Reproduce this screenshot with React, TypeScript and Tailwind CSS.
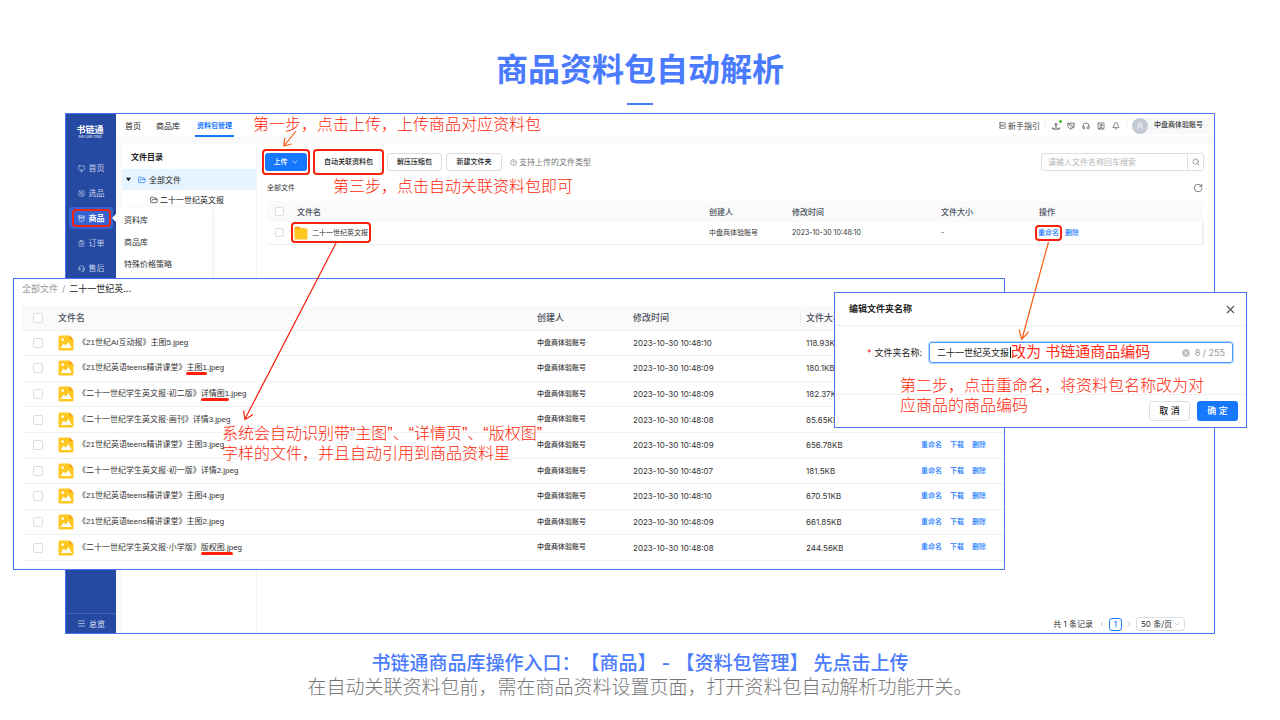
import type { ReactNode } from "react"
import {
  Archive,
  Bell,
  ChevronDown,
  ChevronLeft,
  ChevronRight,
  CircleHelp,
  CircleX,
  ClipboardList,
  FolderOpen,
  Handshake,
  Headphones,
  Headset,
  Menu,
  Monitor,
  RotateCw,
  Search,
  Server,
  SquareChartGantt,
  SquareUser,
  UserRound,
  X,
} from "lucide-react"
import clsx from "clsx"

const navItems = [
  { label: "首页", icon: Monitor },
  { label: "选品", icon: SquareChartGantt },
  { label: "商品", icon: Archive, active: true },
  { label: "订单", icon: ClipboardList },
  { label: "售后", icon: Headset },
]

const subMenu = ["资料库", "商品库", "特殊价格策略"]

const files = [
  { before: "《21世纪AI互动报》主图5.jpeg", time: "10:48:10", size: "118.93KB" },
  { before: "《21世纪英语teens精讲课堂》", mark: "主图1", after: ".jpeg", time: "10:48:09", size: "180.1KB" },
  { before: "《二十一世纪学生英文报·初二版》", mark: "详情图1", after: ".jpeg", time: "10:48:09", size: "182.37KB" },
  { before: "《二十一世纪学生英文报·画刊》详情3.jpeg", time: "10:48:08", size: "85.65KB" },
  { before: "《21世纪英语teens精讲课堂》主图3.jpeg", time: "10:48:09", size: "656.78KB", actions: true },
  { before: "《二十一世纪学生英文报·初一版》详情2.jpeg", time: "10:48:07", size: "181.5KB", actions: true },
  { before: "《21世纪英语teens精讲课堂》主图4.jpeg", time: "10:48:10", size: "670.51KB", actions: true },
  { before: "《21世纪英语teens精讲课堂》主图2.jpeg", time: "10:48:09", size: "661.85KB", actions: true },
  { before: "《二十一世纪学生英文报·小学版》", mark: "版权图.jp", after: "eg", time: "10:48:08", size: "244.56KB", actions: true },
]

function Check({ label, className }: { label: string; className?: string }) {
  return (
    <input
      type="checkbox"
      aria-label={label}
      className={clsx("block appearance-none rounded-[2px] border border-[#dcdcdc] bg-white", className)}
    />
  )
}

function ImageFileIcon() {
  return (
    <svg viewBox="0 0 16 16" className="size-4 shrink-0" aria-hidden="true">
      <path d="M2 .5h9.500L15.500 4.500V14a1.500 1.500 0 0 1-1.500 1.500H2A1.500 1.500 0 0 1 .5 14V2A1.500 1.500 0 0 1 2 .5z" fill="#ffc721" />
      <path d="M11.500.5 15.500 4.500h-3a1 1 0 0 1-1-1z" fill="#f79a0c" />
      <circle cx="4.600" cy="4.600" r="1.300" fill="#fff" />
      <path d="M2.500 13l3.200-4.500 2 2.300L10.300 7l3.400 6z" fill="#fff" />
    </svg>
  )
}

function FolderIcon() {
  return (
    <svg viewBox="0 0 14 14" className="size-[14px] shrink-0" aria-hidden="true">
      <path d="M.5 2A1.300 1.300 0 0 1 1.800.7h3.400l1.500 1.600h4.500v3H.5z" fill="#f79a0c" />
      <rect x=".5" y="2.600" width="13" height="10.900" rx="1.300" fill="#ffc721" />
    </svg>
  )
}

function UploadTrayIcon() {
  return (
    <svg viewBox="0 0 10 10" className="size-2" fill="none" stroke="currentColor" strokeWidth="1.2" aria-hidden="true">
      <path d="M5 7.500V1.800M3.200 3.500 5 1.700l1.800 1.800M.8 6.800v2h8.400v-2" />
    </svg>
  )
}

// Red frame that calls out a control
function Callout({ children, className }: { children: ReactNode; className?: string }) {
  return (
    <span className={clsx("inline-flex items-center justify-center rounded-[4px] border-2 border-[#f5220c]", className)}>
      {children}
    </span>
  )
}

function Note({ children, className }: { children: ReactNode; className: string }) {
  return (
    <p
      className={clsx(
        "absolute z-30 font-['Liberation_Sans','Noto_Sans_CJK_SC',sans-serif] text-base leading-5 font-light whitespace-nowrap text-[#ff1f0a]",
        className,
      )}
    >
      {children}
    </p>
  )
}

function Sidebar() {
  return (
    <aside className="flex w-[50px] shrink-0 flex-col bg-[#264aa2] text-[#c5d0ea]">
      <div className="flex h-[43px] flex-col items-center pt-[10px] pr-[2px] text-white">
        <span className="text-[9px] leading-[11px] font-bold">书链通</span>
        <span className="text-[3px] leading-[4px]">SHU LIAN TONG</span>
      </div>
      <nav className="flex flex-col gap-[3px] px-[3px]">
        {navItems.map(({ label, icon: Icon, active }) => (
          <div key={label} className="relative">
            <a
              href="#"
              className={clsx(
                "flex h-[22px] items-center justify-center gap-1 rounded-[3px] text-[8px]",
                active && "bg-[#3563cf] font-bold text-white",
              )}
            >
              {active ? (
                <Callout className="h-[18px] w-[39px] gap-1">
                  <Icon size={7} />
                  {label}
                </Callout>
              ) : (
                <>
                  <Icon size={7} />
                  {label}
                </>
              )}
            </a>
            {active && (
              <>
                <svg viewBox="0 0 4 8" className="absolute top-[7px] -right-[3px] h-2 w-1" aria-hidden="true">
                  <path d="M4 0v8L0 4z" fill="#fff" />
                </svg>
                <div className="absolute top-0 left-[47px] z-10 flex h-20 w-[96px] flex-col bg-white pt-[2px] pl-2 text-[8px] text-[#333] shadow-[2px_0_4px_rgba(0,0,0,0.06)]">
                  {subMenu.map((item) => (
                    <a key={item} href="#" className="flex h-[22px] items-center">
                      {item}
                    </a>
                  ))}
                </div>
              </>
            )}
          </div>
        ))}
      </nav>
      <a
        href="#"
        className="mt-auto flex h-[20px] items-center justify-center gap-[3px] border-t border-[#4263b0] text-[8px] font-medium"
      >
        <Menu size={9} />
        总览
      </a>
    </aside>
  )
}

function TopBar() {
  return (
    <header className="flex h-6 items-center border-b border-[#f5f5f5] pr-1 pl-[9px] text-[8px] text-[#222]">
      <nav className="flex h-full items-center gap-[15px]">
        <a href="#">首页</a>
        <a href="#">商品库</a>
        <a href="#" className="flex h-full items-center border-b-2 border-[#1677ff] px-[2px] pt-[3px] text-[7px] font-bold text-[#1677ff]">
          资料包管理
        </a>
      </nav>
      <div className="ml-auto flex items-center text-[#444]">
        <a href="#" className="flex items-center gap-[2px] pr-[5px]">
          <Server size={7} />
          新手指引
        </a>
        <div className="flex items-center gap-[7px] border-x border-[#eee] px-[6px]">
          <span className="relative">
            <UploadTrayIcon />
            <span className="absolute -top-[2px] -right-[2px] size-[3px] rounded-full bg-[#35c31b]" />
          </span>
          <Handshake size={8} />
          <Headphones size={8} />
          <SquareUser size={8} />
          <Bell size={8} />
        </div>
        <div className="ml-[5px] flex h-4 items-center gap-[6px] rounded-full bg-[#f7f8fa] pr-[7px] text-[7px] font-medium text-[#333]">
          <span className="flex size-4 items-center justify-center rounded-full bg-[#c5cbd6] text-white">
            <UserRound size={8} />
          </span>
          中盘商体验账号
        </div>
      </div>
    </header>
  )
}

function Directory() {
  return (
    <section className="ml-[6px] w-[135px] shrink-0 border-r border-[#f2f2f2] bg-white text-[8px] text-[#222]">
      <h2 className="flex h-[25px] items-center pl-[9px] font-bold">文件目录</h2>
      <div className="flex h-[21px] items-center bg-[#e6f4ff] pl-1">
        <svg viewBox="0 0 6 6" className="size-[5px]" aria-hidden="true">
          <path d="M0 1h6L3 5z" fill="#111" />
        </svg>
        <FolderOpen size={8} className="mr-[3px] ml-[7px] text-[#1677ff]" />
        全部文件
      </div>
      <div className="flex h-5 items-center gap-[2px] pl-7">
        <FolderOpen size={8} />
        二十一世纪英文报
      </div>
    </section>
  )
}

function Toolbar() {
  const plain = "h-[18px] rounded-[3px] border border-[#dedede] bg-white font-medium whitespace-nowrap"
  return (
    <div className="flex h-[26px] items-center text-[7px] text-[#222]">
      <Callout className="h-[26px] w-12">
        <button className="flex h-[18px] w-[42px] items-center justify-center gap-[3px] rounded-[3px] bg-[#1677ff] font-medium text-white">
          上传
          <ChevronDown size={8} />
        </button>
      </Callout>
      <Callout className="ml-[3px] h-[26px] w-[71px]">
        <button className="h-[18px] w-[63px] font-medium whitespace-nowrap">自动关联资料包</button>
      </Callout>
      <button className={clsx(plain, "ml-[3px] w-[55px]")}>解压压缩包</button>
      <button className={clsx(plain, "ml-1 w-[56px]")}>新建文件夹</button>
      <span className="ml-2 flex items-center gap-[2px] text-[8px] text-[#777]">
        <CircleHelp size={7} />
        支持上传的文件类型
      </span>
      <form className="ml-auto flex h-[18px] w-[163px] rounded-[3px] border border-[#dedede]">
        <input
          type="search"
          aria-label="搜索文件"
          placeholder="请输入文件名称回车搜索"
          className="min-w-0 flex-1 pl-[6px] text-[8px] outline-none placeholder:text-[#b5b5b5]"
        />
        <button type="button" aria-label="搜索" className="flex w-4 items-center justify-center border-l border-[#dedede] text-[#777]">
          <Search size={8} />
        </button>
      </form>
    </div>
  )
}

function FolderTable() {
  return (
    <table className="w-full table-fixed border-collapse text-left text-[7px] text-[#333]">
      <colgroup>
        <col className="w-[22px]" />
        <col />
        <col className="w-[83px]" />
        <col className="w-[149px]" />
        <col className="w-[98px]" />
        <col className="w-[172px]" />
      </colgroup>
      <thead className="bg-[#fafafa] text-[8px] text-[#4a5260]">
        <tr className="h-[21px] *:px-2 *:font-medium">
          <th><Check label="全选文件夹" className="size-[9px]" /></th>
          <th>文件名</th>
          <th>创建人</th>
          <th>修改时间</th>
          <th>文件大小</th>
          <th>操作</th>
        </tr>
      </thead>
      <tbody>
        <tr className="h-[22px] border-b border-[#f0f0f0] *:px-2">
          <td><Check label="选择二十一世纪英文报" className="size-[9px]" /></td>
          <td>
            <Callout className="-ml-[6px] h-[21px] w-20 gap-1 whitespace-nowrap">
              <FolderIcon />
              二十一世纪英文报
            </Callout>
          </td>
          <td className="whitespace-nowrap">中盘商体验账号</td>
          <td className="whitespace-nowrap">2023-10-30 10:48:10</td>
          <td>-</td>
          <td className="border-r-2 border-[#f0f0f0] font-medium text-[#1677ff]">
            <span className="-ml-1 flex items-center gap-[3px]">
              <Callout className="h-4 w-[27px]">
                <button>重命名</button>
              </Callout>
              <button>删除</button>
            </span>
          </td>
        </tr>
      </tbody>
    </table>
  )
}

function Pagination() {
  return (
    <div className="mt-auto flex h-[18px] items-center justify-end pr-[19px] text-[8px] text-[#333]">
      共 1 条记录
      <button aria-label="上一页" className="ml-[5px] text-[#aaa]"><ChevronLeft size={8} /></button>
      <button className="mx-[3px] size-[13px] rounded-[3px] border border-[#1677ff] leading-[11px] font-medium text-[#1677ff]">1</button>
      <button aria-label="下一页" className="mr-[3px] text-[#aaa]"><ChevronRight size={8} /></button>
      <label className="relative flex items-center">
        <select aria-label="每页条数" className="h-[14px] w-[49px] appearance-none rounded-[3px] border border-[#dedede] pl-1 leading-3">
          <option>50 条/页</option>
        </select>
        <ChevronDown size={8} className="pointer-events-none absolute right-1 text-[#bbb]" />
      </label>
    </div>
  )
}

function Workspace() {
  return (
    <div className="flex min-h-[521px] border border-[#4874f5] bg-white">
      <Sidebar />
      <div className="flex min-w-0 flex-1 flex-col">
        <TopBar />
        <div className="flex flex-1 bg-[#f9f9fa] pt-[6px]">
          <Directory />
          <main className="flex min-w-0 flex-1 flex-col bg-white pt-[5px] pr-[10px] pl-[5px]">
            <Toolbar />
            <div className="flex h-[26px] items-center justify-between pr-[1px] pl-[5px] text-[7px] text-[#333]">
              全部文件
              <button aria-label="刷新" className="text-[#666]"><RotateCw size={10} /></button>
            </div>
            <div className="pl-[5px]">
              <FolderTable />
            </div>
            <Pagination />
          </main>
        </div>
      </div>
    </div>
  )
}

function FilePanel() {
  return (
    <section className="absolute top-[165px] right-[275px] left-[13px] z-20 border border-[#4874f5] bg-white pb-2 pl-2">
      <div className="flex h-[27px] items-start gap-1 pt-[3px] text-[9px] leading-[14px] text-[#999]">
        <a href="#">全部文件</a>
        <span>/</span>
        <span className="text-[#222]">二十一世纪英...</span>
      </div>
      <table className="h-[255px] w-full table-fixed border-collapse text-left text-[7px] text-[#333]">
        <colgroup>
          <col className="w-7" />
          <col />
          <col className="w-24" />
          <col className="w-[173px]" />
          <col className="w-[115px]" />
          <col className="w-[91px]" />
        </colgroup>
        <thead className="bg-[#fafafa] text-[9px] text-[#4a5260]">
          <tr className="h-6 border-b border-[#f0f0f0] *:px-2 *:font-medium">
            <th><Check label="全选文件" className="ml-[3px] size-[10px]" /></th>
            <th>文件名</th>
            <th>创建人</th>
            <th>修改时间</th>
            <th className="relative">
              <span className="absolute top-1 left-[2px] h-[14px] w-px bg-[#ececec]" />
              文件大小
            </th>
            <th />
          </tr>
        </thead>
        <tbody>
          {files.map((file, i) => (
            <tr key={i} className="border-b border-[#f0f0f0] *:px-2">
              <td><Check label={`选择文件 ${i + 1}`} className="ml-[3px] size-[10px]" /></td>
              <td>
                <span className="flex items-center gap-1 whitespace-nowrap">
                  <ImageFileIcon />
                  <span className="font-['Liberation_Sans','Noto_Sans_CJK_SC',sans-serif] text-[8px] leading-3">
                    {file.before}
                    {file.mark && (
                      <span className="relative">
                        {file.mark}
                        <span className="absolute inset-x-0 -bottom-[3px] h-[3px] rounded-full bg-[#ff1f0a]" />
                      </span>
                    )}
                    {file.after}
                  </span>
                </span>
              </td>
              <td className="font-medium">中盘商体验账号</td>
              <td className="text-[8px]">2023-10-30 {file.time}</td>
              <td className="text-[8px]">{file.size}</td>
              <td>
                {file.actions && (
                  <span className="flex gap-2 font-medium whitespace-nowrap text-[#1677ff]">
                    <button>重命名</button>
                    <button>下载</button>
                    <button>删除</button>
                  </span>
                )}
              </td>
            </tr>
          ))}
        </tbody>
      </table>
    </section>
  )
}

function RenameDialog() {
  return (
    <section
      role="dialog"
      aria-labelledby="rename-title"
      className="absolute top-[179px] right-[33px] z-20 w-[413px] border border-[#4874f5] bg-white text-[9px] text-[#222]"
    >
      <div className="flex h-[33px] items-center justify-between border-b border-[#f0f0f0] pr-[9px] pl-[14px]">
        <h2 id="rename-title" className="font-bold">编辑文件夹名称</h2>
        <button aria-label="关闭" className="text-[#555]"><X size={13} /></button>
      </div>
      <div className="flex h-[69px] items-start border-b border-[#f0f0f0] pt-4 pr-[13px] pl-8">
        <label htmlFor="folder-name" className="flex h-[21px] w-[62px] items-center gap-[3px]">
          <span className="text-[#f5222d]">*</span>
          文件夹名称:
        </label>
        <div className="flex h-[21px] flex-1 items-center rounded-[3px] border border-[#4a9bff] px-[7px] shadow-[0_0_0_1px_#b9dbff]">
          <input id="folder-name" defaultValue="二十一世纪英文报" className="w-[73px] outline-none" />
          <span className="h-[11px] w-px bg-[#111]" />
          <CircleX size={10} fill="#bbb" stroke="#fff" className="ml-auto" />
          <span className="ml-1 text-[#999]">8 / 255</span>
        </div>
      </div>
      <div className="flex h-8 items-center justify-end gap-[7px] pr-2 font-medium">
        <button className="h-5 w-[41px] rounded-[3px] border border-[#dedede]">取 消</button>
        <button className="h-5 w-[41px] rounded-[3px] bg-[#1677ff] text-white">确 定</button>
      </div>
    </section>
  )
}

function Arrows() {
  return (
    <svg
      viewBox="0 0 1280 521"
      className="pointer-events-none absolute top-0 left-0 z-30 h-[521px] w-[1280px]"
      fill="none"
      strokeWidth="1.2"
      aria-hidden="true"
    >
      <path d="M296 18 284 33M284.700 25 284 33l7.500-2" stroke="#ff5a14" />
      <path d="M336 130 245 306M243.500 297.500 245 306.500l8-5" stroke="#f5220c" />
      <path d="M1048.500 129 1022 226M1019 216.500l2.800 9.800 7-7.600" stroke="#ff5a14" />
    </svg>
  )
}

export default function App() {
  return (
    <div className="min-h-screen bg-white font-[Inter,'Noto_Sans_CJK_SC',sans-serif]">
      <h1 className="pt-[50px] text-center text-[32px] leading-10 font-bold text-[#4a7bff]">商品资料包自动解析</h1>
      <div className="mx-auto mt-[13px] h-[2px] w-[26px] bg-[#4a7bff]" />
      <div className="relative mx-auto mt-2 w-full max-w-[1280px] px-[65px]">
        <Workspace />
        <FilePanel />
        <RenameDialog />
        <Note className="top-[2px] left-[253px]">第一步，点击上传，上传商品对应资料包</Note>
        <Note className="top-16 left-[333px]">第三步，点击自动关联资料包即可</Note>
        <Note className="top-[311px] left-[222px]">
          系统会自动识别带“主图”、“详情页”、“版权图”
          <br />
          字样的文件，并且自动引用到商品资料里
        </Note>
        <Note className="top-[263px] left-[900px]">
          第二步，点击重命名，将资料包名称改为对
          <br />
          应商品的商品编码
        </Note>
        <p className="absolute top-[229px] left-[1011px] z-30 text-[15px] leading-5 whitespace-nowrap text-[#ff2a14]">
          改为 书链通商品编码
        </p>
        <Arrows />
      </div>
      <footer className="mt-[18px] text-center text-[19px] leading-6 [text-spacing-trim:space-all]">
        <p className="font-medium text-[#4a7bff]">书链通商品库操作入口：【商品】 - 【资料包管理】 先点击上传</p>
        <p className="font-light text-[#777]">在自动关联资料包前，需在商品资料设置页面，打开资料包自动解析功能开关。</p>
      </footer>
    </div>
  )
}
